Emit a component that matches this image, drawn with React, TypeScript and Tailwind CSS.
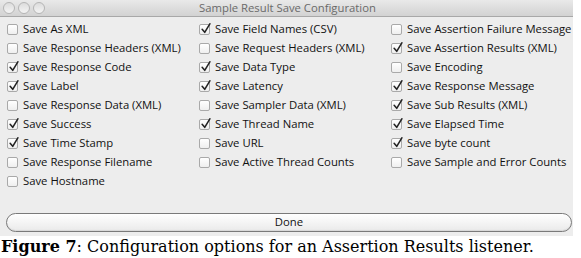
const columns: [string, boolean][][] = [
  [
    ["Save As XML", false],
    ["Save Response Headers (XML)", false],
    ["Save Response Code", true],
    ["Save Label", true],
    ["Save Response Data (XML)", false],
    ["Save Success", true],
    ["Save Time Stamp", true],
    ["Save Response Filename", false],
    ["Save Hostname", false],
  ],
  [
    ["Save Field Names (CSV)", true],
    ["Save Request Headers (XML)", false],
    ["Save Data Type", true],
    ["Save Latency", true],
    ["Save Sampler Data (XML)", false],
    ["Save Thread Name", true],
    ["Save URL", false],
    ["Save Active Thread Counts", false],
  ],
  [
    ["Save Assertion Failure Message", false],
    ["Save Assertion Results (XML)", true],
    ["Save Encoding", false],
    ["Save Response Message", true],
    ["Save Sub Results (XML)", true],
    ["Save Elapsed Time", true],
    ["Save byte count", true],
    ["Save Sample and Error Counts", false],
  ],
];

const Check = ({ label, checked }: { label: string; checked: boolean }) => (
  <div className="flex items-center h-[19px] gap-[5px]">
    <div className="relative w-[11px] h-[11px] rounded-[2px] border border-[#a9a9a9] bg-gradient-to-b from-white to-[#efefef] shrink-0">
      {checked && (
        <svg viewBox="0 0 14 14" className="absolute left-[0px] top-[-3px] w-[12px] h-[13px]">
          <path d="M2.5 8 L5.5 11.5 L11.5 1.5" fill="none" stroke="#222" strokeWidth="1.8" strokeLinecap="round" strokeLinejoin="round" />
        </svg>
      )}
    </div>
    <span className="text-[11.3px] text-[#111] whitespace-nowrap">{label}</span>
  </div>
);

export default function App() {
  return (
    <div className="w-[581px] h-[258px] bg-white overflow-hidden" style={{ fontFamily: '"Open Sans", sans-serif' }}>
      <div className="w-[573px] h-[236px] bg-[#ededed] flex flex-col">
        <div className="relative h-[17px] bg-gradient-to-b from-[#e9e9e9] to-[#d2d2d2] border-b border-[#a8a8a8] flex items-center justify-center">
          <div className="absolute left-[3px] top-[2px] flex gap-[3px]">
            {[0, 1, 2].map((i) => (
              <div key={i} className="w-[12px] h-[12px] rounded-full border border-[#b5b5b5] bg-gradient-to-b from-[#dcdcdc] to-[#f4f4f4]" />
            ))}
          </div>
          <span className="text-[11.3px] text-[#6a6a6a] pl-[2px]">Sample Result Save Configuration</span>
        </div>
        <div className="flex pl-[7px] pt-[3px]">
          <div className="w-[192px]">
            {columns[0].map(([l, c]) => <Check key={l} label={l} checked={c} />)}
          </div>
          <div className="w-[192px]">
            {columns[1].map(([l, c]) => <Check key={l} label={l} checked={c} />)}
          </div>
          <div>
            {columns[2].map(([l, c]) => <Check key={l} label={l} checked={c} />)}
          </div>
        </div>
        <div className="pl-[6px] pr-[1px] mt-auto mb-[4px]">
          <div className="h-[19px] rounded-full border border-[#7a7a7a] bg-gradient-to-b from-white to-[#eaeaea] shadow-[inset_0_-1px_1px_rgba(0,0,0,0.08)] flex items-center justify-center">
            <span className="text-[11.3px] text-[#111]">Done</span>
          </div>
        </div>
      </div>
      <div className="pl-[1px] pt-[2px] text-[16px] text-black leading-[18px]" style={{ fontFamily: '"DejaVu Serif", serif' }}>
        <span className="font-bold">Figure 7</span>: Configuration options for an Assertion Results listener.
      </div>
    </div>
  );
}
